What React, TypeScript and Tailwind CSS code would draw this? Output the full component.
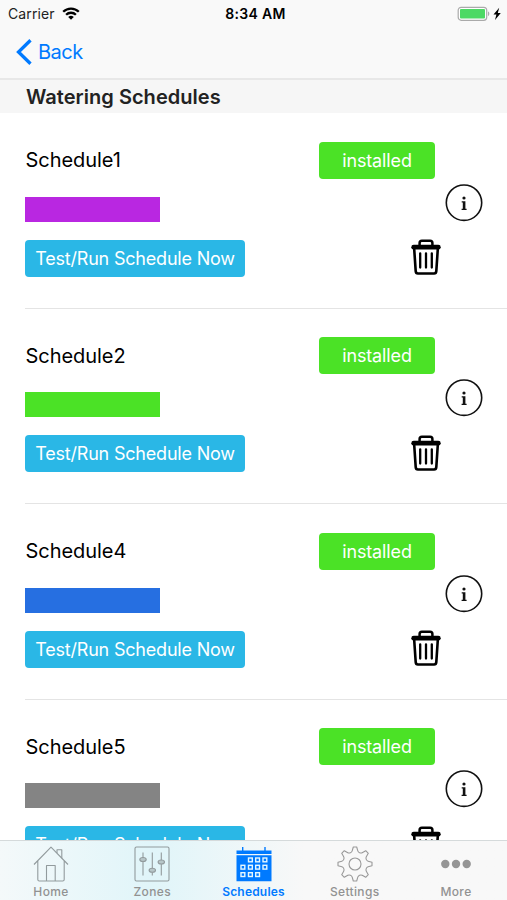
import type { ReactNode } from "react";

const schedules = [
  { name: "Schedule1", color: "bg-[#b927e1]" },
  { name: "Schedule2", color: "bg-[#4be226]" },
  { name: "Schedule4", color: "bg-[#266fe1]" },
  { name: "Schedule5", color: "bg-[#848484]" },
];

function StatusBar() {
  return (
    <div className="h-[27px] flex items-center justify-between pl-[8px] pr-[4px] text-[14px] text-[#222]">
      <div className="w-[180px] flex items-center gap-[7px]">
        <span className="tracking-[0.1px]">Carrier</span>
        <svg width="18" height="13" viewBox="0 0 18 13" fill="none" stroke="#000" strokeWidth="2.3">
          <path d="M1.2 4.8a11 11 0 0 1 15.6 0" />
          <path d="M4.1 7.8a6.9 6.9 0 0 1 9.8 0" />
          <path d="M9 12.8 6.2 10a4 4 0 0 1 5.6 0Z" fill="#000" stroke="none" />
        </svg>
      </div>
      <span className="font-semibold text-black tracking-[0.3px]">8:34 AM</span>
      <div className="w-[180px] flex items-center justify-end">
        <svg width="46" height="16" viewBox="0 0 46 16">
          <rect x="1.2" y="1.3" width="28.5" height="13" rx="3" fill="#fff" stroke="#aaa" strokeWidth="1.2" />
          <rect x="3" y="3.1" width="25" height="9.4" rx="1" fill="#4cd964" />
          <path d="M31 5.6v4.5c1.8-.6 1.8-3.9 0-4.5Z" fill="#aaa" />
          <path d="M42.2 1.8 36.5 8.6h2.9L38 14l5.8-7h-3Z" fill="#000" />
        </svg>
      </div>
    </div>
  );
}

function InfoIcon() {
  return (
    <svg width="38" height="38" viewBox="0 0 38 38">
      <circle cx="19" cy="18.7" r="17.7" fill="none" stroke="#111" strokeWidth="1.6" />
      <circle cx="19" cy="14" r="1.6" fill="#111" />
      <path d="M16.7 17.2h3.7v7.500h1.200v1.200h-5v-1.200h1.200v-6.200h-1.100Z" fill="#111" />
    </svg>
  );
}

function TrashIcon() {
  return (
    <svg width="30" height="36" viewBox="0 0 30 36" fill="none" stroke="#000" strokeLinecap="round" strokeLinejoin="round">
      <path d="M8.6 6.3V4.1c0-1.4.9-2.3 2.3-2.3h8.2c1.4 0 2.3.9 2.3 2.3v2.2" strokeWidth="2.5" />
      <path d="M2.7 8.2h24.6" strokeWidth="4.8" />
      <path d="m3.2 10 1.5 22.2c.1 1.5.9 2.3 2.2 2.3h16.2c1.3 0 2.1-.8 2.2-2.3L26.8 10" strokeWidth="2.6" />
      <path d="M9.2 14.3v14.2M15 14.3v14.2M20.8 14.3v14.2" strokeWidth="2.3" />
    </svg>
  );
}

function ScheduleRow({ name, color }: { name: string; color: string }) {
  return (
    <div className="h-[195.5px] shrink-0 flex pl-[25px]">
      <div className="flex-1 flex flex-col items-start pt-[29px] border-b border-[#e4e4e4]">
        <div className="h-[36px] flex items-center pl-[0.5px] text-[20px] leading-none text-black tracking-[-0.05px]">{name}</div>
        <div className={`mt-[18.5px] w-[135px] h-[25px] ${color}`} />
        <button className="mt-[18px] w-[220px] h-[37px] rounded-[4px] bg-[#2ab7e6] text-white text-[18px] tracking-[-0.2px] whitespace-nowrap">
          Test/Run Schedule Now
        </button>
      </div>
      <div className="w-[116px] flex flex-col pt-[28.5px] border-b border-[#e4e4e4]">
        <div className="h-[37px] flex items-center justify-center rounded-[4px] bg-[#4be226] text-white text-[18px] tracking-[-0.13px]">
          installed
        </div>
        <button className="mt-[60.5px] ml-[92px] w-[30px]">
          <TrashIcon />
        </button>
      </div>
      <div className="w-[72px] pl-[10px] pt-[70.5px] border-b border-[#e4e4e4]">
        <button>
          <InfoIcon />
        </button>
      </div>
    </div>
  );
}

function HomeIcon() {
  return (
    <svg className="shrink-0" width="36" height="36" viewBox="0 0 36 36" fill="none" stroke="#929b9d" strokeWidth="1.1" strokeLinejoin="round">
      <path d="M1 18.5 18 1.2l17 17.3M4.8 15v18.500c0 1 .5 1.500 1.500 1.500h23.400c1 0 1.500-.5 1.500-1.500V15M13.500 35V19.500h8.700V35" />
      <path d="M24 7V3.8h4.8v8.400" />
    </svg>
  );
}

function ZonesIcon() {
  return (
    <svg className="shrink-0" width="36" height="36" viewBox="0 0 36 36" fill="none" stroke="#929b9d" strokeWidth="1.1">
      <rect x="1" y="1" width="34" height="34" rx="1.5" />
      <path d="M9 6.5v23M18.3 6.5v23M27.3 6.5v23" />
      <g fill="#b7c6c8">
        <ellipse cx="9" cy="13.5" rx="3.2" ry="2" />
        <ellipse cx="18.3" cy="24.3" rx="3.2" ry="2" />
        <ellipse cx="27.3" cy="16" rx="3.2" ry="2" />
      </g>
    </svg>
  );
}

function CalendarIcon() {
  const days = [
    [12.5, 12], [19.7, 12], [27, 12],
    [5, 19.3], [12.5, 19.3], [19.7, 19.3], [27, 19.3],
    [5, 26.7], [12.5, 26.7], [19.7, 26.7],
  ];
  return (
    <svg className="shrink-0" width="36" height="36" viewBox="0 0 36 36" fill="#007aff">
      <path d="M.5 4.5h35v3.4H.5ZM.5 9.3h35v26H.5ZM6 1h1.4v5H6ZM28.3 1h1.4v5h-1.400Z" />
      {days.map(([x, y]) => (
        <rect key={`${x}-${y}`} x={x} y={y} width="3.8" height="3.8" stroke="#e5f7ff" strokeWidth="1.4" />
      ))}
    </svg>
  );
}

function GearIcon() {
  return (
    <svg className="shrink-0" width="36" height="36" viewBox="0 0 36 36" fill="none" stroke="#999" strokeWidth="1.1" strokeLinejoin="round">
      <circle cx="18" cy="18" r="6" />
      <path d="M16.3 1h3.400l1.100 3.900c.5 1.700 2.800 2.700 4.400 1.800l3.500-2 2.600 2.600-2 3.500c-.9 1.600.1 3.900 1.800 4.400l3.900 1.100v3.400l-3.900 1.100c-1.700.5-2.700 2.800-1.800 4.400l2 3.500-2.600 2.600-3.500-2c-1.600-.9-3.900.1-4.400 1.800L19.700 35h-3.400l-1.100-3.900c-.5-1.700-2.800-2.700-4.400-1.800l-3.500 2-2.600-2.600 2-3.500c.9-1.600-.1-3.900-1.800-4.400L1 19.700v-3.400l3.900-1.100c1.700-.5 2.700-2.800 1.800-4.400l-2-3.500 2.600-2.600 3.500 2c1.600.9 3.900-.1 4.400-1.800Z" />
    </svg>
  );
}

function MoreIcon() {
  return (
    <svg className="shrink-0" width="36" height="36" viewBox="0 0 36 36" fill="#959595">
      <circle cx="7.3" cy="18" r="4.2" />
      <circle cx="18" cy="18" r="4.2" />
      <circle cx="28.7" cy="18" r="4.2" />
    </svg>
  );
}

function Tab({ label, active, children }: { label: string; active?: boolean; children: ReactNode }) {
  return (
    <button
      className={`w-[101px] flex flex-col items-center text-[12px] leading-[18px] ${
        active ? "text-[#007aff] font-semibold tracking-[0.2px]" : "text-[#929292] font-medium tracking-[0.35px]"
      }`}
    >
      {children}
      <span className="pt-px">{label}</span>
    </button>
  );
}

export default function App() {
  return (
    <div className="w-[507px] h-[900px] flex flex-col overflow-hidden bg-white font-['Inter','Liberation_Sans',sans-serif]">
      <header className="h-[80px] shrink-0 bg-[#f9f9f9] border-b-2 border-[#e8e8e8]">
        <StatusBar />
        <button className="h-[50px] flex items-center pl-[16px] gap-[6px] text-[20px] text-[#007aff] tracking-[-0.5px]">
          <svg width="16" height="26" viewBox="0 0 16 26" fill="none" stroke="#007aff" strokeWidth="3.3">
            <path d="M14.5 1.3 2.5 13l12 11.7" />
          </svg>
          <span>Back</span>
        </button>
      </header>

      <h2 className="h-[33px] shrink-0 flex items-center pl-[26px] pt-px bg-[#f6f6f6] text-[20px] font-semibold text-[#222] tracking-[0.03px]">
        Watering Schedules
      </h2>

      <main className="flex-1 min-h-0 flex flex-col overflow-hidden">
        {schedules.map((s) => (
          <ScheduleRow key={s.name} name={s.name} color={s.color} />
        ))}
      </main>

      <nav className="h-[60px] shrink-0 flex items-start justify-between px-[0.5px] pt-[4.5px] border-t border-[#d5dadb] bg-linear-to-r from-[#f4f9fa] via-[#e0f5f9] via-30% to-[#f8f8f8] to-60%">
        <Tab label="Home">
          <HomeIcon />
        </Tab>
        <Tab label="Zones">
          <ZonesIcon />
        </Tab>
        <Tab label="Schedules" active>
          <CalendarIcon />
        </Tab>
        <Tab label="Settings">
          <GearIcon />
        </Tab>
        <Tab label="More">
          <MoreIcon />
        </Tab>
      </nav>
    </div>
  );
}
